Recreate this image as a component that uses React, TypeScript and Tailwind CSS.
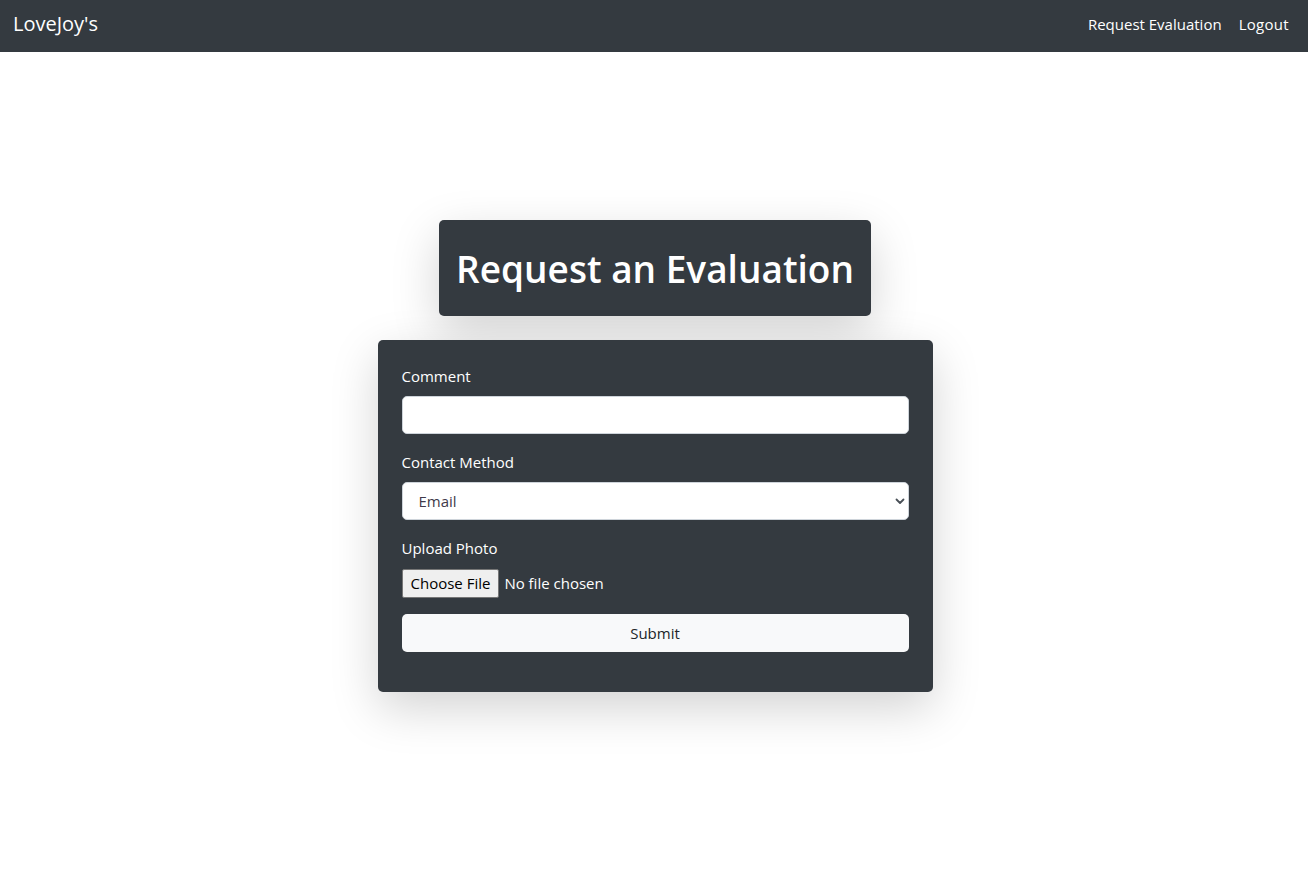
import React from 'react';

const font = { fontFamily: '"Segoe UI", "Open Sans", "Noto Sans", sans-serif' };

const App = () => {
  return (
    <div className="min-h-[896px] bg-white text-[#212529]" style={font}>
      {/* Navbar */}
      <nav className="h-[52px] bg-[#343a40] flex items-center justify-between pl-[13px] pr-[19px] pb-[4px]">
        <a href="#" className="text-[20px] text-white leading-[30px]">
          LoveJoy's
        </a>
        <div className="flex items-center gap-[17px] text-[15px] text-white">
          <a href="#">Request Evaluation</a>
          <a href="#" className="tracking-[0.3px]">Logout</a>
        </div>
      </nav>

      <main className="flex flex-col items-center pt-[168px] pl-[2px]">
        {/* Title */}
        <div className="w-[432px] h-[96px] bg-[#343a40] rounded-[5px] shadow-[0_1rem_3rem_rgba(0,0,0,0.175)] flex items-center justify-center">
          <h1 className="text-[37px] font-semibold text-white leading-[48px] pt-[2px]">Request an Evaluation</h1>
        </div>

        {/* Form */}
        <form className="mt-[24px] w-[555px] bg-[#343a40] rounded-[5px] shadow-[0_1rem_3rem_rgba(0,0,0,0.175)] px-[24px] pt-[24px] pb-[40px]">
          <div className="mb-[16px]">
            <label className="block text-[15px] leading-[24px] mb-[8px] text-white">Comment</label>
            <input
              type="text"
              className="block w-full h-[38px] rounded-[5px] border border-[#ced4da] bg-white px-[12px] text-[16px] outline-none"
            />
          </div>

          <div className="mb-[16px]">
            <label className="block text-[15px] leading-[24px] mb-[8px] text-white">Contact Method</label>
            <div className="relative">
              <select className="block w-full h-[38px] appearance-none rounded-[5px] border border-[#ced4da] bg-white pl-[16px] pr-[36px] text-[15px] text-[#3f3a4a] outline-none">
                <option>Email</option>
                <option>Phone</option>
              </select>
              <svg
                className="absolute right-[4px] top-1/2 -translate-y-1/2 pointer-events-none"
                width="10"
                height="8"
                viewBox="0 0 10 8"
              >
                <path d="M1.5 2.5 L5 6 L8.5 2.5" fill="none" stroke="#495057" strokeWidth="1.8" strokeLinecap="round" strokeLinejoin="round" />
              </svg>
            </div>
          </div>

          <div className="mb-[16px]">
            <label className="block text-[15px] leading-[24px] mb-[9px] text-white">Upload Photo</label>
            <div className="flex items-center h-[29px]">
              <span className="h-[29px] px-[8px] flex items-center bg-[#efefef] border border-[#767676] rounded-[2px] text-[15px] text-black">
                Choose File
              </span>
              <span className="ml-[5px] text-[15px] text-white">No file chosen</span>
            </div>
          </div>

          <button
            type="button"
            className="block w-full h-[38px] rounded-[5px] bg-[#f8f9fa] text-[15px] text-[#212529]"
          >
            Submit
          </button>
        </form>
      </main>
    </div>
  );
};

export default App;
